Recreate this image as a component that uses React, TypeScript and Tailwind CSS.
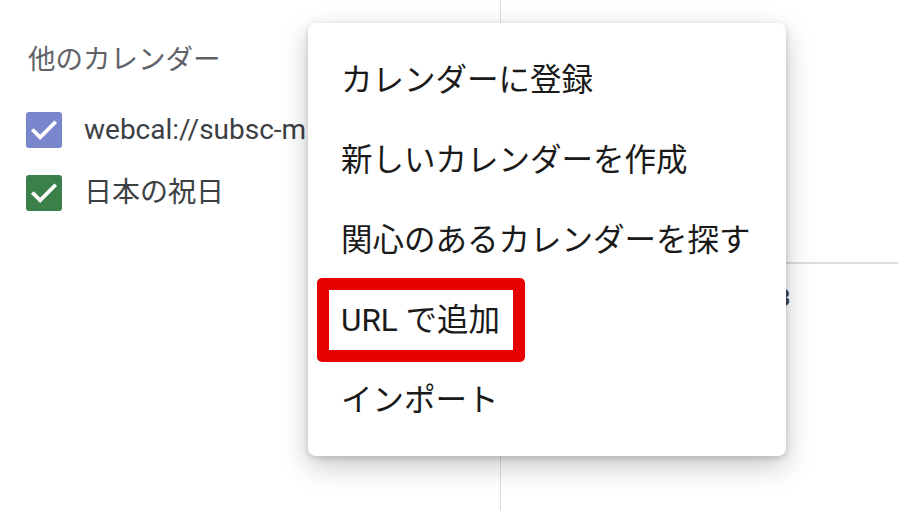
import React from "react";

const font = { fontFamily: "Roboto, 'Noto Sans CJK JP', sans-serif" };

function Check({ color }: { color: string }) {
  return (
    <span className={`flex h-[36px] w-[36px] shrink-0 items-center justify-center rounded-[3px] ${color}`}>
      <svg width="32" height="32" viewBox="0 0 24 24" fill="none">
        <path d="M4.2 12.6l4.9 4.9 10.7-10.7" stroke="white" strokeWidth="2.8" strokeLinecap="square" />
      </svg>
    </span>
  );
}

const items = [
  "カレンダーに登録",
  "新しいカレンダーを作成",
  "関心のあるカレンダーを探す",
  "URL で追加",
  "インポート",
];

export default function App() {
  return (
    <div className="relative flex h-[510px] w-[898px] overflow-hidden bg-white" style={font}>
      {/* Left sidebar */}
      <div className="w-[501px] shrink-0 border-r border-[#dadce0] pl-[26px] pt-[42px]">
        <div className="flex h-[36px] items-center pl-[2px] text-[27.5px] text-[#5f6368]">他のカレンダー</div>
        <div className="mt-[20px] flex h-[63px] items-center gap-[22px] text-[28px] text-[#3c4043]">
          <Check color="bg-[#7986cb]" />
          <span>webcal://subsc-m</span>
        </div>
        <div className="flex h-[63px] items-center gap-[22px] text-[28px] text-[#3c4043]">
          <Check color="bg-[#3b7f4a]" />
          <span>日本の祝日</span>
        </div>
      </div>

      {/* Right grid */}
      <div className="relative flex-1">
        <div className="h-[264px] border-b-2 border-[#dadce0]" />
        <span className="absolute left-[262px] top-[280px] text-[24px] font-medium text-[#3c4043]">13</span>
      </div>

      {/* Menu */}
      <div className="absolute left-[308px] top-[23px] w-[478px] rounded-[8px] bg-white pb-[15px] pt-[18px] shadow-[0_10px_28px_rgba(0,0,0,0.22),0_2px_6px_rgba(0,0,0,0.16)]">
        {items.map((t, i) => (
          <div key={t} className="relative flex h-[80px] items-center pl-[33px] text-[31.5px] text-[#1a1a1a]">
            {i === 3 && (
              <div className="absolute left-[9px] top-[-3px] h-[84px] w-[208px] rounded-[5px] border-[12px] border-[#e60000]" />
            )}
            <span className="relative">{t}</span>
          </div>
        ))}
      </div>
    </div>
  );
}
